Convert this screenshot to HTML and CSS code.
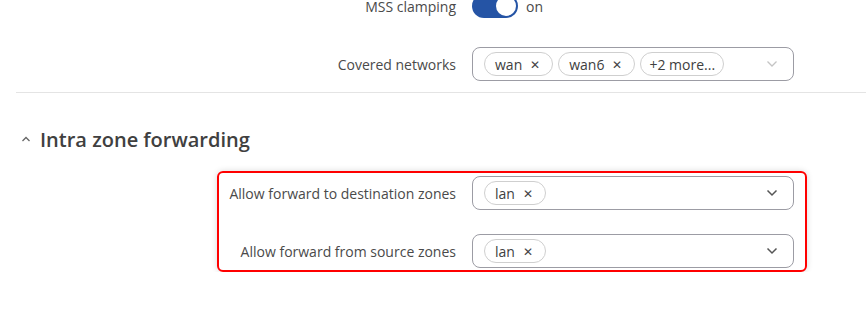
FILE: index.html
```html
<!DOCTYPE html>
<html lang="en">
<head>
    <meta charset="UTF-8">
    <title>Zone settings</title>
    <link rel="stylesheet" href="styles.css">
</head>
<body>
    <div class="page">
        <div class="section section-top">
            <div class="row">
                <label class="row-label">MSS clamping</label>
                <div class="row-value">
                    <span class="toggle"><span class="toggle-knob"></span></span>
                    <span class="toggle-text">on</span>
                </div>
            </div>
            <div class="row">
                <label class="row-label">Covered networks</label>
                <div class="select select-muted">
                    <span class="chip">wan <span class="chip-x">&#x2715;</span></span>
                    <span class="chip">wan6 <span class="chip-x">&#x2715;</span></span>
                    <span class="chip chip-more">+2 more...</span>
                    <svg class="chevron" width="12" height="8" viewBox="0 0 12 8"><path d="M1.5 1.5 L6 6 L10.5 1.5" fill="none" stroke="currentColor" stroke-width="1.3"/></svg>
                </div>
            </div>
        </div>

        <h2 class="section-title">
            <svg class="caret" width="10" height="8" viewBox="0 0 10 8"><path d="M1.5 6 L5 2.5 L8.5 6" fill="none" stroke="currentColor" stroke-width="1.3"/></svg>
            Intra zone forwarding
        </h2>

        <div class="highlight">
            <div class="row row-inner">
                <label class="row-label">Allow forward to destination zones</label>
                <div class="select">
                    <span class="chip">lan <span class="chip-x">&#x2715;</span></span>
                    <svg class="chevron" width="12" height="8" viewBox="0 0 12 8"><path d="M1.5 1.5 L6 6 L10.5 1.5" fill="none" stroke="currentColor" stroke-width="1.5"/></svg>
                </div>
            </div>
            <div class="row row-inner">
                <label class="row-label">Allow forward from source zones</label>
                <div class="select">
                    <span class="chip">lan <span class="chip-x">&#x2715;</span></span>
                    <svg class="chevron" width="12" height="8" viewBox="0 0 12 8"><path d="M1.5 1.5 L6 6 L10.5 1.5" fill="none" stroke="currentColor" stroke-width="1.5"/></svg>
                </div>
            </div>
        </div>
    </div>
</body>
</html>
```

FILE: styles.css
```css
:root {
    --text-color: #404040;
    --label-color: #4a4a4a;
    --blue: #2554a5;
    --border: #9c9ca4;
    --chip-border: #cfcfcf;
    --divider: #e4e4e4;
}

* {
    margin: 0;
    padding: 0;
    box-sizing: border-box;
}

body {
    font-family: 'Open Sans', 'Noto Sans', sans-serif;
    color: var(--text-color);
    background: #fff;
    font-size: 14px;
}

.page {
    padding-left: 16px;
}

.section-top {
    margin-top: -11px;
    padding-bottom: 11px;
    border-bottom: 1px solid var(--divider);
    display: flex;
    flex-direction: column;
    gap: 24px;
}

.row {
    display: grid;
    grid-template-columns: 440px 322px;
    column-gap: 16px;
    align-items: center;
    height: 34px;
}

.row-label {
    text-align: right;
    color: var(--label-color);
    font-size: 14px;
}

.row-value {
    display: flex;
    align-items: center;
    gap: 8px;
}

.toggle {
    width: 46px;
    height: 24px;
    border-radius: 12px;
    background: var(--blue);
    display: flex;
    align-items: center;
    justify-content: flex-end;
    padding: 2px;
}

.toggle-knob {
    width: 20px;
    height: 20px;
    border-radius: 50%;
    background: #fff;
}

.toggle-text {
    font-size: 14px;
    color: var(--label-color);
}

.select {
    height: 34px;
    border: 1px solid var(--border);
    border-radius: 8px;
    display: flex;
    align-items: center;
    gap: 5px;
    padding: 0 15px 0 11px;
}

.chip {
    height: 24px;
    border: 1px solid var(--chip-border);
    border-radius: 12px;
    padding: 0 10px;
    display: inline-flex;
    align-items: center;
    font-size: 14px;
    color: var(--text-color);
    white-space: nowrap;
}

.chip-more {
    padding: 0 8px;
}

.chip-x {
    font-size: 12px;
    margin-left: 8px;
    margin-right: 2px;
    color: #444;
}

.chevron {
    margin-left: auto;
    color: #555;
}

.select-muted .chevron {
    color: #c4c4c4;
}

.section-title {
    display: flex;
    align-items: center;
    gap: 9px;
    font-size: 20px;
    font-weight: 600;
    color: var(--text-color);
    padding-left: 5px;
    margin-top: 32px;
    height: 28px;
}

.caret {
    color: #666;
}

.highlight {
    margin: 18px 0 0 201px;
    width: 590px;
    border: 2px solid #f00;
    border-radius: 6px;
    box-shadow: 0 0 6px rgba(0, 0, 0, 0.15);
    padding: 3px 11px 2px 0;
    display: flex;
    flex-direction: column;
    gap: 24px;
}

.row-inner {
    grid-template-columns: 1fr 322px;
}
```
